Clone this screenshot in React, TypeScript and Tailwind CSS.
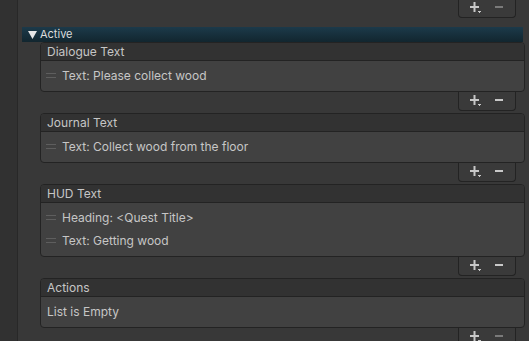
import React from "react";

const font = { fontFamily: "Inter, 'Noto Sans', sans-serif" };

function Handle() {
  return (
    <div className="flex w-[10px] flex-col gap-[3px] mr-[6px]">
      <div className="h-px w-[10px] bg-[#5e5e5e]" />
      <div className="h-px w-[10px] bg-[#5e5e5e]" />
    </div>
  );
}

function Footer({ minusDim = false }: { minusDim?: boolean }) {
  return (
    <div className="flex justify-end pr-[13px]">
      <div className="flex h-[19px] w-[58px] items-center justify-center gap-[13px] rounded-b-[4px] border-x border-b border-[#232323] bg-[#3a3a3a] pb-px">
        <svg width="12" height="12" viewBox="0 0 12 12">
          <rect x="0" y="4" width="9" height="2" fill="#c8c8c8" />
          <rect x="3.5" y="0" width="2" height="10" fill="#c8c8c8" />
          <rect x="8" y="9" width="3" height="1" fill="#c8c8c8" />
          <rect x="9" y="10" width="1" height="1" fill="#c8c8c8" />
        </svg>
        <svg width="9" height="12" viewBox="0 0 9 12">
          <rect x="0" y="4" width="8" height="2" fill={minusDim ? "#7a7a7a" : "#c8c8c8"} />
        </svg>
      </div>
    </div>
  );
}

function ListBox({
  title,
  items,
  empty = false,
  minusDim = false,
}: {
  title: string;
  items: string[];
  empty?: boolean;
  minusDim?: boolean;
}) {
  return (
    <div className="flex flex-col">
      <div className="mr-[4px] flex flex-col overflow-hidden rounded-[4px] border border-[#232323] bg-[#414141]">
        <div className="flex h-[18px] items-center border-b border-[#232323] bg-[#323232] px-[6px] text-[12px] text-[#c6c6c6]">
          {title}
        </div>
        <div className="flex flex-col pt-[3px] pb-[4px]">
          {empty ? (
            <div className="flex h-[23px] items-center px-[6px] text-[12px] text-[#c6c6c6]">
              List is Empty
            </div>
          ) : (
            items.map((it) => (
              <div key={it} className="flex h-[23px] items-center pl-[5px] text-[12px] text-[#c6c6c6]">
                <Handle />
                {it}
              </div>
            ))
          )}
        </div>
      </div>
      <Footer minusDim={minusDim} />
    </div>
  );
}

export default function App() {
  return (
    <div className="flex h-[341px] w-[529px] overflow-hidden bg-[#383838]" style={font}>
      <div className="h-full w-[18px] shrink-0 border-r border-[#282828] bg-[#313131]" />
      <div className="flex flex-1 flex-col">
        <div className="-mt-[1px]">
          <Footer minusDim />
        </div>
        <div className="mt-[9px] ml-[4px] mr-[6px] flex h-[15px] items-center gap-[3px] bg-gradient-to-b from-[#1c3a4a] to-[#12262f] pl-[6px] text-[11px] text-[#dcdcdc]">
          <svg width="9" height="8" viewBox="0 0 9 8">
            <polygon points="0,0 9,0 4.5,8" fill="#e6e6e6" />
          </svg>
          Active
        </div>
        <div className="ml-[22px] flex flex-col gap-[2px]">
          <ListBox title="Dialogue Text" items={["Text: Please collect wood"]} />
          <ListBox title="Journal Text" items={["Text: Collect wood from the floor"]} />
          <ListBox title="HUD Text" items={["Heading: <Quest Title>", "Text: Getting wood"]} />
          <ListBox title="Actions" items={[]} empty minusDim />
        </div>
      </div>
    </div>
  );
}
